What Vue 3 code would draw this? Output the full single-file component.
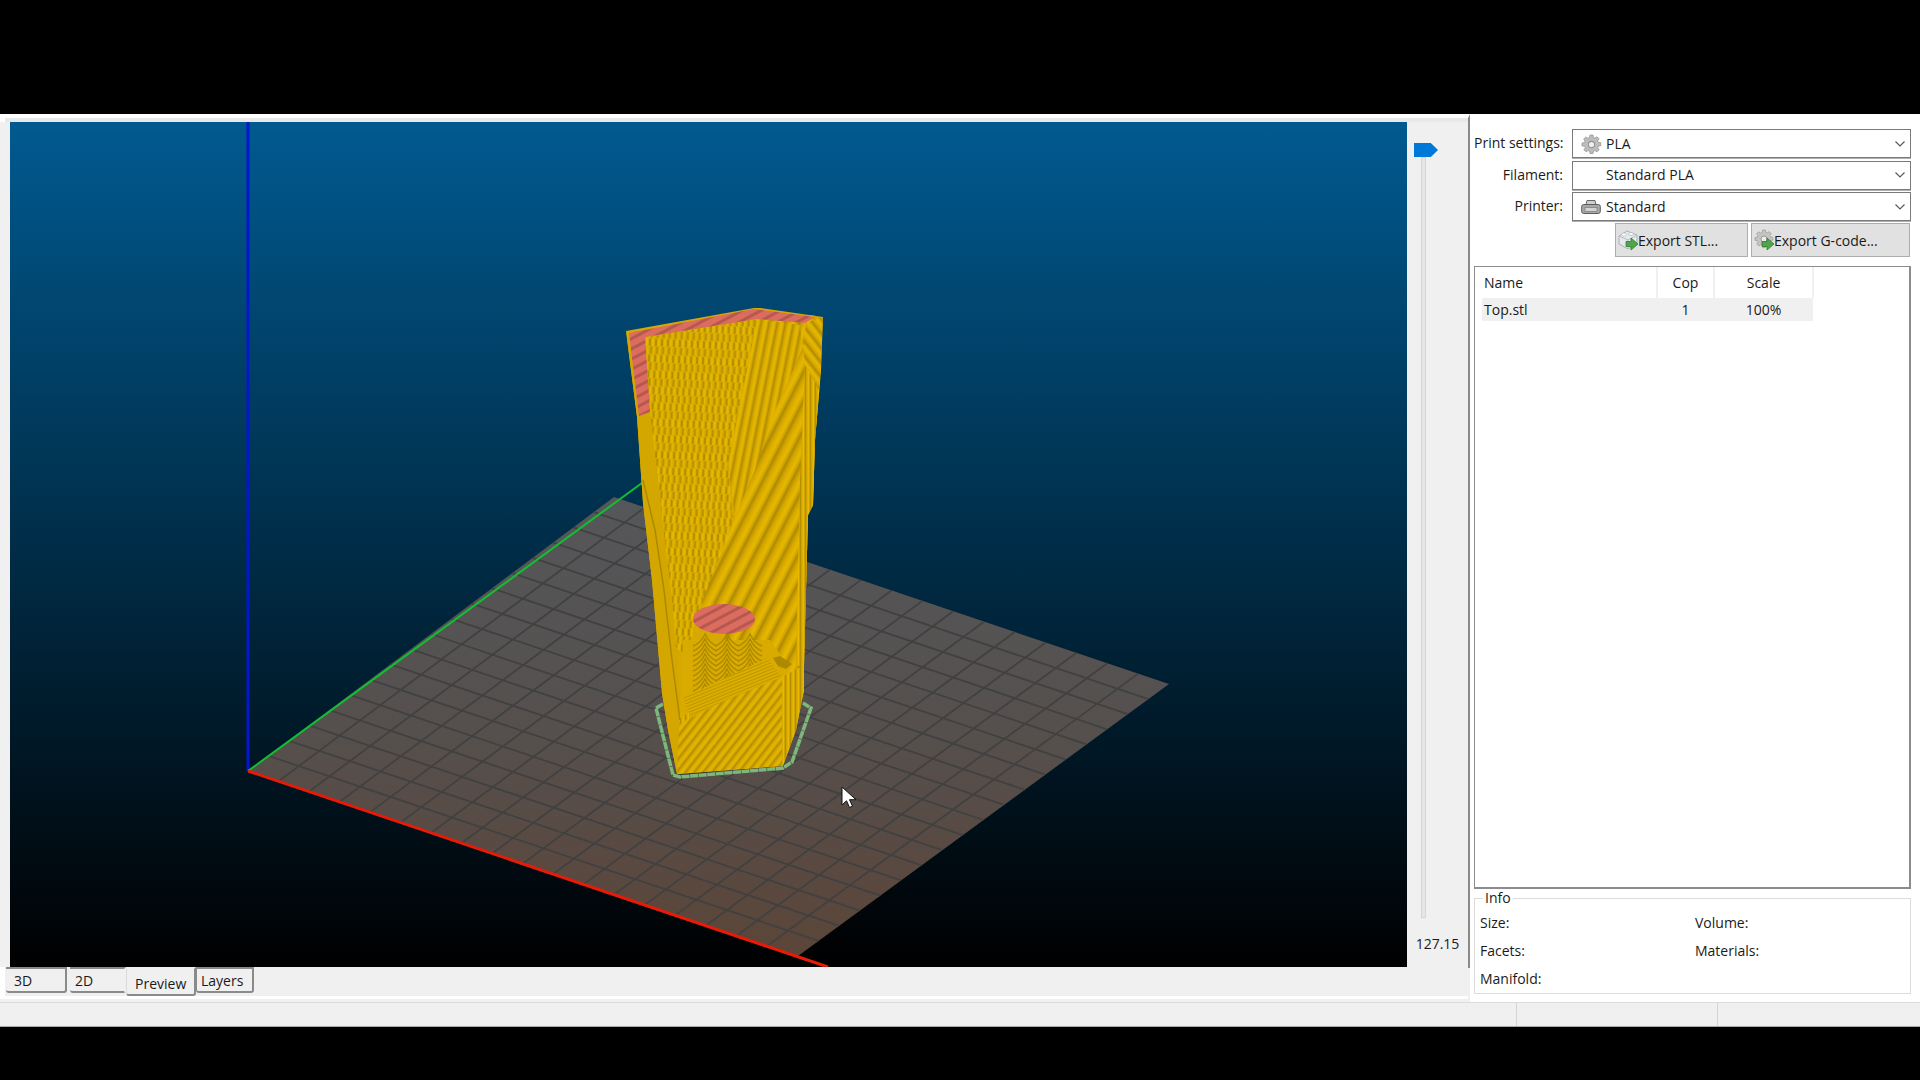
<script setup>
// bed corners in page pixels, the scene svg uses the same numbers
const origin = [248, 771]
const back = [614, 497]
const right = [1169, 684]
const front = [798, 956]

const mix = (a, b, t) => [a[0] + (b[0] - a[0]) * t, a[1] + (b[1] - a[1]) * t]

const gridLines = []
for (let i = 1; i < 18; i++) {
  const t = i / 18
  const a = mix(origin, front, t)
  const b = mix(back, right, t)
  gridLines.push({ x1: a[0], y1: a[1], x2: b[0], y2: b[1] })
  const c = mix(origin, back, t)
  const d = mix(front, right, t)
  gridLines.push({ x1: c[0], y1: c[1], x2: d[0], y2: d[1] })
}

const bedPoints = [origin, back, right, front].map((p) => p.join(',')).join(' ')

// nested arches under the round top
const arches = []
for (const cx of [705, 727, 750]) {
  for (let k = 0; k < 11; k++) {
    const y = 634 + k * 5
    arches.push(`M${cx - 12} ${y + 12} Q${cx - 4} ${y + 9} ${cx} ${y} Q${cx + 4} ${y + 9} ${cx + 12} ${y + 12}`)
  }
}

const settings = [
  { label: 'Print settings:', value: 'PLA', icon: 'gear' },
  { label: 'Filament:', value: 'Standard PLA', icon: '' },
  { label: 'Printer:', value: 'Standard', icon: 'printer' },
]

const tabs = [
  { name: '3D', cls: 'tab-3d' },
  { name: '2D', cls: 'tab-2d' },
  { name: 'Preview', cls: 'tab-preview' },
  { name: 'Layers', cls: 'tab-layers' },
]

const gearPath =
  'M8.600 1h2.800l.4 2.300 1.500.6 1.900-1.300 2 2-1.300 1.900.6 1.500 2.300.4v2.800l-2.300.4-.6 1.500 1.300 1.900-2 2-1.900-1.300-1.500.6-.4 2.300H8.600l-.4-2.300-1.500-.6-1.900 1.300-2-2 1.300-1.900-.6-1.500L1 11.400V8.600l2.300-.4.6-1.500-1.300-1.900 2-2 1.900 1.300 1.500-.6z'
</script>

<template>
  <div class="page">
    <div class="window">
      <div class="main">
        <div class="left">
          <div class="view-row">
            <svg class="scene" viewBox="10 122 1397 845" width="1397" height="845">
              <defs>
                <linearGradient id="sky" x1="0" y1="0" x2="0" y2="1">
                  <stop offset="0" stop-color="#005a90" />
                  <stop offset="1" stop-color="#000000" />
                </linearGradient>
                <linearGradient id="bedFill" gradientUnits="userSpaceOnUse" x1="0" y1="497" x2="0" y2="956">
                  <stop offset="0" stop-color="#55575a" />
                  <stop offset="0.5" stop-color="#55504e" />
                  <stop offset="1" stop-color="#5c4538" />
                </linearGradient>
                <linearGradient id="rib" x1="0" y1="0" x2="1" y2="0">
                  <stop offset="0" stop-color="#a98500" />
                  <stop offset="0.35" stop-color="#d6a800" />
                  <stop offset="0.7" stop-color="#e8b900" />
                  <stop offset="1" stop-color="#c29a00" />
                </linearGradient>
                <pattern id="wide" width="13" height="20" patternUnits="userSpaceOnUse" patternTransform="rotate(27)">
                  <rect width="13" height="20" fill="url(#rib)" />
                </pattern>
                <pattern id="steep" width="8" height="20" patternUnits="userSpaceOnUse" patternTransform="rotate(11)">
                  <rect width="8" height="20" fill="url(#rib)" />
                </pattern>
                <pattern id="chevron" width="9" height="20" patternUnits="userSpaceOnUse" patternTransform="rotate(-38)">
                  <rect width="9" height="20" fill="url(#rib)" />
                </pattern>
                <pattern id="fine" width="7" height="20" patternUnits="userSpaceOnUse" patternTransform="rotate(38)">
                  <rect width="7" height="20" fill="url(#rib)" />
                </pattern>
                <pattern id="vertical" width="5" height="20" patternUnits="userSpaceOnUse">
                  <rect width="5" height="20" fill="url(#rib)" />
                </pattern>
                <pattern id="tiny" width="3" height="20" patternUnits="userSpaceOnUse" patternTransform="rotate(68)">
                  <rect width="3" height="20" fill="url(#rib)" />
                </pattern>
                <pattern id="brick" width="6" height="16" patternUnits="userSpaceOnUse" patternTransform="rotate(3)">
                  <rect width="6" height="16" fill="#d9ab00" />
                  <rect x="0" y="0" width="2" height="7" fill="#b39000" />
                  <rect x="1.500" y="8" width="2" height="7" fill="#b39000" />
                  <rect x="3" y="0" width="2" height="7" fill="#e6b700" />
                  <rect x="4" y="8" width="1.500" height="7" fill="#e6b700" />
                </pattern>
                <pattern id="redStripe" width="9" height="20" patternUnits="userSpaceOnUse" patternTransform="rotate(62)">
                  <rect width="9" height="20" fill="#dc6b60" />
                  <rect width="3" height="20" fill="#b5594e" />
                </pattern>
                <clipPath id="towerClip">
                  <polygon
                    points="626,331 754,308 760,308 823,317 821,370 815,440 813,505 808,515 804,666 804,690 796,730 783,766 677,774 668,730 662,693 652,580 643,503 637,417"
                  />
                </clipPath>
              </defs>

              <rect x="10" y="122" width="1397" height="845" fill="url(#sky)" />
              <polygon :points="bedPoints" fill="url(#bedFill)" />
              <line
                v-for="(l, i) in gridLines"
                :key="i"
                :x1="l.x1"
                :y1="l.y1"
                :x2="l.x2"
                :y2="l.y2"
                stroke="#414141"
                stroke-width="1.800"
              />

              <!-- axes -->
              <line x1="248" y1="122" x2="248" y2="771" stroke="#0416d0" stroke-width="3" />
              <line x1="248" y1="771" x2="642" y2="483" stroke="#10c030" stroke-width="2" />
              <line x1="248" y1="771" x2="828" y2="967" stroke="#e81a08" stroke-width="3" />

              <!-- skirt -->
              <polyline
                points="663,704 656,708 673,775 680,777 783,768 792,762 811,708 803,703"
                fill="none"
                stroke="#7cb87a"
                stroke-width="3.500"
                stroke-dasharray="8 0.600"
              />
              <polyline points="676,772 680,774 784,765" fill="none" stroke="#3a3626" stroke-width="1.500" />

              <!-- printed part -->
              <g clip-path="url(#towerClip)">
                <rect x="620" y="300" width="210" height="480" fill="#d6a800" />
                <polygon points="757,319 815,315 830,700 760,690 700,600 735,517 728,463" fill="url(#wide)" />
                <polygon points="757,319 800,325 803,347 773,415 755,470 735,517 728,463" fill="url(#steep)" />
                <polygon points="645,337 757,319 728,463 733,523 695,620 690,660 668,640 660,500 650,412" fill="url(#brick)" />
                <polygon points="803,347 806,323 823,317 820,395 805,365" fill="url(#chevron)" />
                <polygon points="805,365 822,395 816,480 810,670 796,665 800,480" fill="url(#vertical)" />
                <polygon points="626,331 650,412 660,500 672,600 680,695 679,775 670,775 640,500" fill="#d4a600" />
                <polyline points="643,480 655,530 664,590 672,660 680,720" fill="none" stroke="#ab8900" stroke-width="1.500" />
                <polygon points="683,640 770,640 790,668 782,680 720,705 680,720" fill="#d9ab00" />
                <path
                  v-for="(d, i) in arches"
                  :key="'a' + i"
                  :d="d"
                  fill="none"
                  stroke="#ad8a00"
                  stroke-width="1.500"
                />
                <polygon points="683,698 767,658 782,677 720,703 690,716" fill="url(#tiny)" />
                <polygon points="680,718 690,712 690,760 680,770" fill="url(#vertical)" />
                <polygon points="679,724 720,703 782,677 782,766 677,775" fill="url(#fine)" />
                <polygon points="782,677 804,665 804,712 783,766" fill="url(#vertical)" />
                <polygon points="773,658 780,656 792,664 786,669 778,666" fill="#ab8900" />
              </g>

              <!-- exposed top faces -->
              <polygon
                points="629,333 754,309 815,317 805,323 757,319 645,337 650,412 639,416"
                fill="url(#redStripe)"
              />
              <ellipse cx="724" cy="619" rx="31" ry="15" fill="url(#redStripe)" />
            </svg>
            <div class="slider-col">
              <div class="slider-thumb"></div>
              <div class="slider-track"></div>
              <div class="slider-value">127.15</div>
            </div>
          </div>
          <div class="tabs">
            <div v-for="tab in tabs" :key="tab.name" class="tab" :class="tab.cls">{{ tab.name }}</div>
          </div>
        </div>

        <div class="panel">
          <div class="settings">
            <div v-for="row in settings" :key="row.label" class="setting-row">
              <label class="setting-label">{{ row.label }}</label>
              <div class="combo">
                <span class="combo-icon">
                  <svg v-if="row.icon === 'gear'" viewBox="0 0 20 20" width="21" height="21">
                    <path :d="gearPath" fill="#bdbdbd" stroke="#989898" stroke-width="0.800" />
                    <circle cx="10" cy="10" r="3" fill="#eee" stroke="#909090" />
                  </svg>
                  <svg v-if="row.icon === 'printer'" viewBox="0 0 20 20" width="20" height="20">
                    <path d="M5 7.500 6 3.500h8l1 4z" fill="#cfcfcf" stroke="#666" />
                    <rect x="0.700" y="7.500" width="18.600" height="9" rx="2" fill="#a8a8a8" stroke="#5c5c5c" />
                    <rect x="4" y="10.500" width="12" height="4" fill="#d4d4d4" stroke="#7a7a7a" stroke-width="0.700" />
                  </svg>
                </span>
                <span class="combo-text">{{ row.value }}</span>
                <svg class="chevron" viewBox="0 0 10 6" width="10" height="6">
                  <path d="M.5.5 5 5 9.500.5" fill="none" stroke="#555" stroke-width="1.100" />
                </svg>
              </div>
            </div>
          </div>

          <div class="exports">
            <button class="export stl">
              <svg viewBox="0 0 22 24" width="22" height="24">
                <path d="M1 8 9 3l10 4v8l-9 6-9-5z" fill="#e6eaee" stroke="#a9b0b7" />
                <path d="M1 8l9 4 9-5M10 12v9" fill="none" stroke="#b6bcc2" />
                <ellipse cx="6" cy="6.500" rx="2.500" ry="1.500" fill="#fff" stroke="#b0b6bc" stroke-width="0.700" />
                <ellipse cx="13" cy="6" rx="2.500" ry="1.500" fill="#fff" stroke="#b0b6bc" stroke-width="0.700" />
                <path d="M8 13.500h5V10l7 6-7 6v-3.500H8z" fill="#4fa64a" stroke="#2f7d35" stroke-width="0.800" />
              </svg>
              <span>Export STL...</span>
            </button>
            <button class="export gcode">
              <svg viewBox="0 0 22 24" width="22" height="24">
                <g transform="translate(0 1)">
                  <path :d="gearPath" fill="#c4c4c4" stroke="#a0a0a0" stroke-width="0.800" />
                  <circle cx="10" cy="10" r="3" fill="#ececec" stroke="#9a9a9a" />
                </g>
                <path d="M8 13.500h5V10l7 6-7 6v-3.500H8z" fill="#4fa64a" stroke="#2f7d35" stroke-width="0.800" />
              </svg>
              <span>Export G-code...</span>
            </button>
          </div>

          <div class="list">
            <table class="parts">
              <thead>
                <tr>
                  <th class="col-name">Name</th>
                  <th class="col-copies">Cop</th>
                  <th class="col-scale">Scale</th>
                </tr>
              </thead>
              <tbody>
                <tr>
                  <td class="col-name">Top.stl</td>
                  <td class="col-copies">1</td>
                  <td class="col-scale">100%</td>
                </tr>
              </tbody>
            </table>
          </div>

          <fieldset class="info">
            <legend>Info</legend>
            <div class="info-grid">
              <span>Size:</span>
              <span>Volume:</span>
              <span>Facets:</span>
              <span>Materials:</span>
              <span>Manifold:</span>
            </div>
          </fieldset>
        </div>
      </div>
      <div class="statusbar">
        <div class="status-cell first"></div>
        <div class="status-cell second"></div>
        <div class="status-cell"></div>
      </div>
    </div>
  </div>
  <svg class="cursor" viewBox="0 0 15 23" width="15" height="23">
    <path d="M1 1v18l4.500-4.200 3 6.700 3-1.300-3-6.500H15z" fill="#fff" stroke="#111" stroke-width="1" />
  </svg>
</template>

<style scoped>
.page {
  position: relative;
  width: 1920px;
  height: 1080px;
  box-sizing: border-box;
  padding-top: 114px;
  background: #000;
  font-family: "Open Sans", "Noto Sans", sans-serif;
  font-size: 14px;
  color: #1a1a1a;
  overflow: hidden;
}

.window {
  height: 913px;
  display: flex;
  flex-direction: column;
  background: #f0f0f0;
}

.main {
  height: 888px;
  display: flex;
}

.left {
  width: 1470px;
  height: 854px;
  box-sizing: border-box;
  padding: 4px 0 0 10px;
  border-top: 4px solid #fff;
  border-right: 2px solid #8a8a8a;
  background: #e9e9e9;
  box-shadow: inset 5px 0 0 #fff;
}

.view-row {
  height: 846px;
  display: flex;
  background: #f0f0f0;
  border-bottom: 2px solid #8a8a8a;
  margin-left: -10px;
  padding-left: 10px;
}

.scene {
  display: block;
  flex: none;
}

.slider-col {
  position: relative;
  flex: 1;
  background: #f0f0f0;
}

.slider-thumb {
  position: absolute;
  left: 7px;
  top: 21px;
  width: 24px;
  height: 14px;
  background: #0078d7;
  clip-path: polygon(0 0, 70% 0, 100% 50%, 70% 100%, 0 100%);
}

.slider-track {
  position: absolute;
  left: 14px;
  top: 35px;
  width: 5px;
  height: 761px;
  box-sizing: border-box;
  background: #e6e6e6;
  border: 1px solid #d6d6d6;
}

.slider-value {
  position: absolute;
  left: 0;
  right: 0;
  top: 812px;
  text-align: center;
}

.tabs {
  position: absolute;
  left: 0;
  top: 967px;
  width: 1468px;
  height: 32px;
  display: flex;
  background: #f0f0f0;
  border-bottom: 3px solid #fff;
  box-sizing: border-box;
  padding-left: 6px;
  box-shadow: inset 5px 0 0 #fff;
}

.tab {
  height: 26px;
  box-sizing: border-box;
  padding: 0 0 0 8px;
  line-height: 23px;
  background: #f0f0f0;
  border-top: 2px solid #8a8a8a;
  border-right: 2px solid #8a8a8a;
  border-bottom: 2px solid #8a8a8a;
  border-radius: 0 0 3px 3px;
}

.tab-3d {
  width: 61px;
  margin-right: 3px;
}

.tab-2d {
  width: 56px;
  padding-left: 5px;
  border-right-color: #f0f0f0;
}

.tab-preview {
  width: 70px;
  height: 29px;
  padding-left: 8px;
  line-height: 29px;
  border-top-color: #f0f0f0;
  border-left: 1px solid #dcdcdc;
}

.tab-layers {
  width: 58px;
  padding-left: 4px;
  border-left: 1px solid #8a8a8a;
}

.panel {
  position: relative;
  flex: 1;
  background: #fff;
  box-sizing: border-box;
  padding: 15px 9px 0 4px;
}

.settings {
  display: flex;
  flex-direction: column;
  gap: 2.500px;
}

.setting-row {
  display: flex;
  align-items: center;
  gap: 9px;
  height: 29px;
}

.setting-label {
  width: 89px;
  padding-bottom: 2px;
  text-align: right;
  white-space: nowrap;
}

.combo {
  flex: 1;
  height: 29px;
  box-sizing: border-box;
  display: flex;
  align-items: center;
  padding: 0 5px 0 8px;
  background: #fff;
  border: 1px solid #7a7a7a;
  box-shadow: 0 1px 0 #b0b0b0;
}

.combo-icon {
  width: 20px;
  height: 20px;
  margin-right: 5px;
  flex: none;
}

.combo-text {
  flex: 1;
  padding-bottom: 1px;
}

.chevron {
  flex: none;
}

.exports {
  display: flex;
  justify-content: flex-end;
  gap: 3px;
  margin-top: 2px;
  padding-right: 1px;
}

.export {
  height: 34px;
  box-sizing: border-box;
  display: flex;
  align-items: center;
  padding: 0 0 0 2px;
  background: #e1e1e1;
  border: 1px solid #adadad;
  font: inherit;
  color: inherit;
}

.export svg {
  margin-right: -2px;
}

.stl {
  width: 133px;
}

.gcode {
  width: 159px;
}

.list {
  height: 623px;
  box-sizing: border-box;
  margin-top: 9px;
  padding: 0 0 0 7px;
  background: #fff;
  border: 2px solid #8c8c8c;
  border-width: 1px 2px 2px 1px;
}

.parts {
  border-collapse: collapse;
  table-layout: fixed;
  width: 327px;
}

.parts th {
  height: 31px;
  padding: 0;
  font-weight: 400;
  border-right: 2px solid #f0f0f0;
}

.parts td {
  height: 23px;
  padding: 0;
  background: #f0f0f0;
}

.col-name {
  width: 175px;
  box-sizing: border-box;
  padding-left: 2px !important;
  text-align: left;
}

.col-copies {
  width: 55px;
  text-align: center;
}

.col-scale {
  width: 97px;
  text-align: center;
}

.info {
  margin: 1px 0 0;
  padding: 0 0 0 5px;
  height: 104px;
  box-sizing: border-box;
  border: 1px solid #dcdcdc;
  position: relative;
}

.info legend {
  margin-left: 3px;
  padding: 0 2px;
  line-height: 16px;
}

.info-grid {
  display: grid;
  grid-template-columns: 215px 1fr;
  grid-auto-rows: 28px;
  align-items: center;
  margin-top: 2px;
}

.statusbar {
  position: absolute;
  left: 0;
  right: 0;
  top: 1002px;
  height: 25px;
  box-sizing: border-box;
  display: flex;
  background: #f0f0f0;
  border-top: 1px solid #dcdcdc;
  border-bottom: 1px solid #a8a8a8;
}

.status-cell {
  flex: 1;
}

.first {
  flex: none;
  width: 1516px;
  border-right: 1px solid #d4d4d4;
}

.second {
  flex: none;
  width: 200px;
  border-right: 1px solid #d4d4d4;
}

.cursor {
  position: absolute;
  left: 841px;
  top: 786px;
}
</style>

<style>
html,
body {
  margin: 0;
  background: #000;
}
</style>
